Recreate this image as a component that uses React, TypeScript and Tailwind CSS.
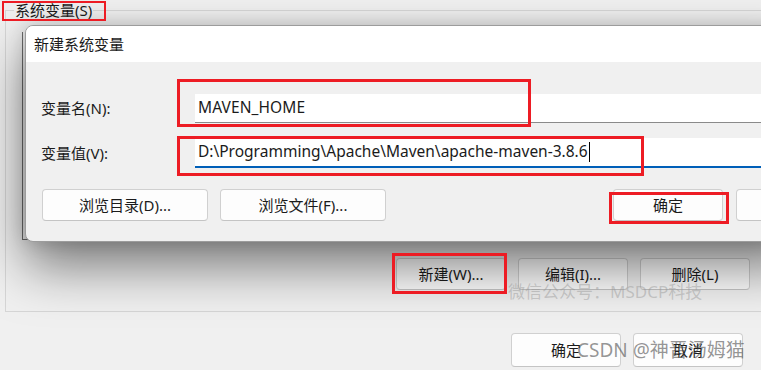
import React from "react";

const font = { fontFamily: '"Noto Sans", "Noto Sans CJK SC", sans-serif' };

function Btn({ children, className = "" }: { children: React.ReactNode; className?: string }) {
  return (
    <div
      className={
        "flex shrink-0 items-center justify-center rounded-[4px] border border-[#d0d0d0] border-b-[#c4c4c4] bg-[#fdfdfd] text-[15px] text-[#1b1b1b] " +
        className
      }
    >
      {children}
    </div>
  );
}

export default function App() {
  return (
    <div
      className="relative h-[370px] w-[761px] overflow-hidden bg-[#f0f0f0] text-[#1b1b1b]"
      style={font}
    >
      {/* parent window: 系统变量 group */}
      <div className="relative ml-[5px] mt-[10px] h-[302px] w-[820px] border border-[#d6d6d6]">
        <div className="absolute left-[8px] top-[-11px] bg-[#f0f0f0] px-[1px] text-[15px] leading-[20px]">
          系统变量(S)
        </div>
        <div className="ml-[16px] mt-[21px] h-[208px] w-[760px] border-b border-l border-[#6e6e6e]" />
        <div className="mt-[18px] flex gap-[12px] pl-[390px]">
          <Btn className="h-[32px] w-[110px]">新建(W)...</Btn>
          <Btn className="h-[32px] w-[110px]">编辑(I)...</Btn>
          <Btn className="h-[32px] w-[110px]">删除(L)</Btn>
        </div>
      </div>
      <div className="mt-[21px] flex gap-[12px] pl-[511px]">
        <Btn className="h-[34px] w-[110px]">确定</Btn>
        <Btn className="h-[34px] w-[110px]">取消</Btn>
      </div>

      {/* dialog window */}
      <div className="absolute left-[25px] top-[25px] flex h-[217px] w-[780px] flex-col overflow-hidden rounded-[8px] border border-[#9c9c9c] bg-[#f0f0f0] shadow-[0_24px_52px_rgba(0,0,0,0.5),0_0_18px_rgba(0,0,0,0.15)]">
        <div className="flex h-[36px] shrink-0 items-center bg-white pl-[8px] text-[15px]">新建系统变量</div>
        <div className="flex flex-col pl-[15px]">
          <div className="mt-[32px] flex h-[29px] items-center">
            <div className="w-[154px] shrink-0 text-[15px]">变量名(N):</div>
            <div className="flex h-[29px] flex-1 items-center border-b border-[#8a8a8a] bg-white pl-[3px] text-[15.5px] tracking-[0.1px]">
              MAVEN_HOME
            </div>
          </div>
          <div className="mt-[15px] flex h-[30px] items-center">
            <div className="w-[154px] shrink-0 text-[15px]">变量值(V):</div>
            <div className="flex h-[30px] flex-1 items-center whitespace-nowrap border-b-2 border-[#005fb8] bg-white pl-[3px] text-[15.5px]">
              D:\Programming\Apache\Maven\apache-maven-3.8.6
              <span className="ml-[1px] inline-block h-[20px] w-[1px] bg-black" />
            </div>
          </div>
          <div className="mt-[21px] flex h-[32px] items-stretch">
            <Btn className="ml-[1px] w-[166px]">浏览目录(D)...</Btn>
            <Btn className="ml-[12px] w-[166px]">浏览文件(F)...</Btn>
            <Btn className="ml-[227px] w-[110px]">确定</Btn>
            <Btn className="ml-[13px] w-[110px]">取消</Btn>
          </div>
        </div>
      </div>

      {/* watermarks */}
      <div className="pointer-events-none absolute left-[508px] top-[280px] text-[17px] leading-[24px] text-[rgba(150,150,150,0.45)]">
        微信公众号：MSDCP科技
      </div>
      <div className="pointer-events-none absolute left-[577px] top-[337px] text-[19px] leading-[26px] text-[rgba(60,60,60,0.55)]">
        CSDN @神晋汤姆猫
      </div>

      {/* red annotation boxes */}
      <div className="pointer-events-none absolute left-[2px] top-[1px] h-[20px] w-[104px] border-2 border-[#ed1c24]" />
      <div className="pointer-events-none absolute left-[177px] top-[79px] h-[48px] w-[354px] border-[3px] border-[#ed1c24]" />
      <div className="pointer-events-none absolute left-[177px] top-[136px] h-[40px] w-[467px] border-[3px] border-[#ed1c24]" />
      <div className="pointer-events-none absolute left-[609px] top-[192px] h-[32px] w-[120px] border-[3px] border-[#ed1c24]" />
      <div className="pointer-events-none absolute left-[392px] top-[253px] h-[41px] w-[115px] border-[3px] border-[#ed1c24]" />
    </div>
  );
}
